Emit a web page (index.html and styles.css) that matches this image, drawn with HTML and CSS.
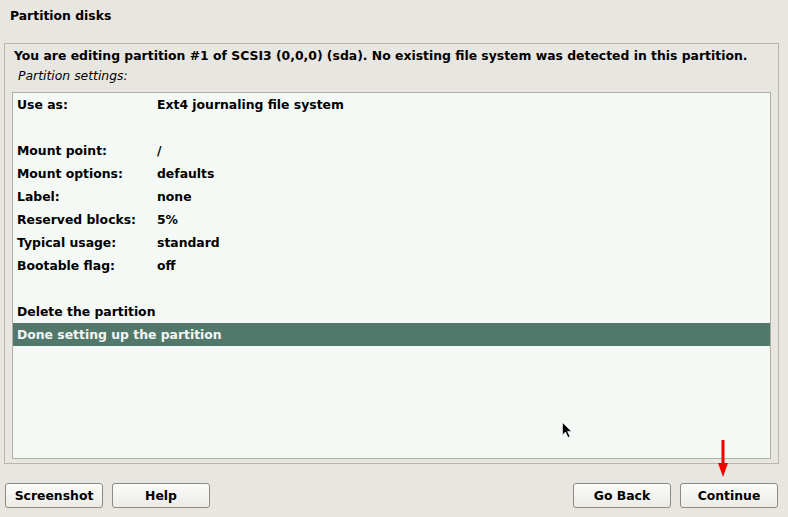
FILE: index.html
```html
<!DOCTYPE html>
<html>
<head>
<meta charset="utf-8">
<link rel="stylesheet" href="styles.css">
</head>
<body>
<div class="app">
  <div class="title">Partition disks</div>
  <div class="frame">
    <div class="intro">You are editing partition #1 of SCSI3 (0,0,0) (sda). No existing file system was detected in this partition.</div>
    <div class="sub">Partition settings:</div>
    <div class="list">
      <div class="row"><span class="k">Use as:</span><span class="v">Ext4 journaling file system</span></div>
      <div class="row"></div>
      <div class="row"><span class="k">Mount point:</span><span class="v">/</span></div>
      <div class="row"><span class="k">Mount options:</span><span class="v">defaults</span></div>
      <div class="row"><span class="k">Label:</span><span class="v">none</span></div>
      <div class="row"><span class="k">Reserved blocks:</span><span class="v">5%</span></div>
      <div class="row"><span class="k">Typical usage:</span><span class="v">standard</span></div>
      <div class="row"><span class="k">Bootable flag:</span><span class="v">off</span></div>
      <div class="row"></div>
      <div class="row"><span class="k wide">Delete the partition</span></div>
      <div class="row selected"><span class="k wide">Done setting up the partition</span></div>
      <svg class="cursor" width="12" height="18" viewBox="0 0 12 18"><path d="M0.5 0.5 L0.5 13 L3.5 10 L6 15.5 L8 14.5 L5.5 9.5 L9.5 9.5 Z" fill="#000" stroke="#fff" stroke-width="0.6"/></svg>
    </div>
  </div>
  <div class="buttons">
    <div class="group">
      <button class="btn">Screenshot</button>
      <button class="btn">Help</button>
    </div>
    <div class="group">
      <button class="btn">Go Back</button>
      <button class="btn">Continue</button>
    </div>
  </div>
  <svg class="redarrow" width="12" height="38" viewBox="0 0 12 38"><rect x="4.5" y="0" width="3" height="26" fill="#f20000"/><path d="M1 23 L11 23 L6 37 Z" fill="#f20000"/></svg>
</div>
</body>
</html>
```
FILE: styles.css
```css
html, body {
  margin: 0;
  padding: 0;
  background: #e8e6e1;
}
.app {
  position: relative;
  width: 788px;
  height: 517px;
  font-family: "DejaVu Sans", sans-serif;
  font-weight: bold;
  font-size: 12.4px;
  color: #000;
  display: flex;
  flex-direction: column;
}
.title {
  padding: 8px 0 0 10px;
  height: 36px;
  line-height: 16px;
  box-sizing: border-box;
}
.frame {
  margin: 7px 9px 0 4px;
  border: 1px solid #b9b5ab;
  height: 421px;
  box-sizing: border-box;
  padding: 3px 7px 4px 7px;
  display: flex;
  flex-direction: column;
}
.intro {
  line-height: 18px;
  padding-left: 2px;
  white-space: nowrap;
}
.sub {
  font-style: italic;
  font-weight: normal;
  line-height: 18px;
  padding-left: 6px;
  padding-top: 2px;
}
.list {
  position: relative;
  margin-top: 7px;
  flex: 1;
  background: #f5f9f5;
  border: 1px solid #b3afa5;
}
.row {
  height: 23px;
  line-height: 23px;
  padding-left: 4px;
  display: flex;
  white-space: nowrap;
}
.k {
  width: 140px;
}
.k.wide {
  width: auto;
}
.row.selected {
  background: #52786c;
  color: #f4f6f4;
}
.cursor {
  position: absolute;
  left: 549px;
  top: 329px;
}
.buttons {
  display: flex;
  justify-content: space-between;
  padding: 19px 10px 0 5px;
}
.group {
  display: flex;
  gap: 9px;
}
.btn {
  width: 98px;
  height: 25px;
  font-family: "DejaVu Sans", sans-serif;
  font-weight: bold;
  font-size: 12.4px;
  color: #000;
  background: linear-gradient(#fbfbfa, #ecebe6);
  border: 1px solid #8e8b84;
  border-radius: 3px;
  padding: 0;
}
.redarrow {
  position: absolute;
  left: 717px;
  top: 440px;
}
```
